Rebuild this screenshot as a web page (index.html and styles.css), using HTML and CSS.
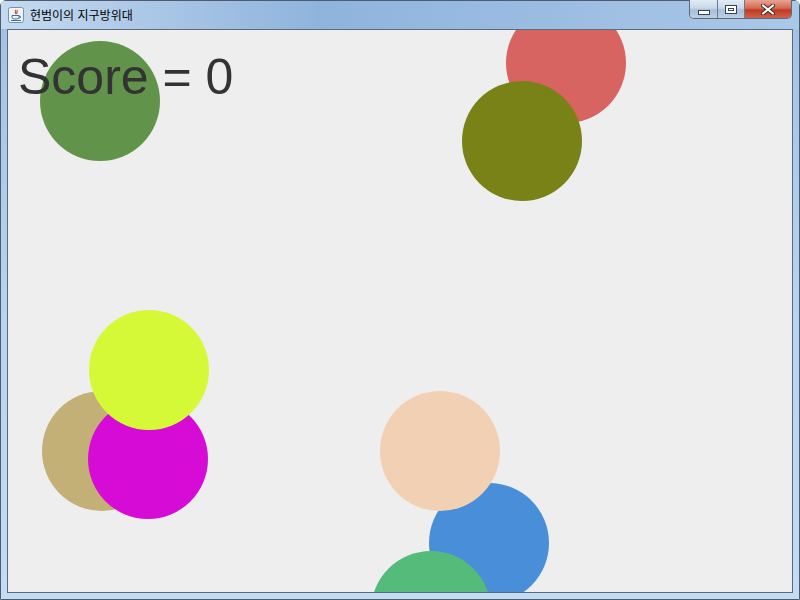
FILE: index.html
```html
<!DOCTYPE html>
<html lang="ko">
<head>
<meta charset="utf-8">
<title>현범이의 지구방위대</title>
<link rel="stylesheet" href="styles.css">
</head>
<body>
<div class="window">
  <div class="titlebar">
    <div class="app-icon">
      <svg width="16" height="16" viewBox="0 0 16 16">
        <rect x="0.5" y="0.5" width="15" height="15" rx="2" fill="#eef3f8" stroke="#7f8fa3"/>
        <path d="M7 3 C9 4 6 5 8 7 M9 3 C10 5 8 5 9 7" stroke="#e0501c" stroke-width="1.2" fill="none"/>
        <path d="M4 8.5 H11 V10 Q11 12 8.5 12 H6.5 Q4 12 4 10 Z" fill="none" stroke="#3a6fb0" stroke-width="1"/>
        <path d="M11 9 Q13 9 12.5 10.5 Q12 11 11 11" fill="none" stroke="#3a6fb0" stroke-width="1"/>
        <path d="M3 13.5 H13" stroke="#3a6fb0" stroke-width="1"/>
      </svg>
    </div>
    <div class="title">현범이의 지구방위대</div>
    <div class="controls">
      <div class="ctl ctl-min"><span class="min-bar"></span></div>
      <div class="ctl ctl-max"><span class="max-box"></span></div>
      <div class="ctl ctl-close">
        <svg width="14" height="11" viewBox="0 0 14 11">
          <path d="M2 1.5 L12 9.5 M12 1.5 L2 9.5" stroke="#3a2a2a" stroke-width="4" stroke-linecap="round"/>
          <path d="M2 1.5 L12 9.5 M12 1.5 L2 9.5" stroke="#ffffff" stroke-width="2.2" stroke-linecap="round"/>
        </svg>
      </div>
    </div>
  </div>
  <div class="client">
    <div class="canvas">
      <div class="ball" style="left:498px;top:-27px;background:#d76461"></div>
      <div class="ball" style="left:454px;top:51px;background:#788216"></div>
      <div class="ball" style="left:32px;top:11px;background:#61944a"></div>
      <div class="ball" style="left:34px;top:361px;background:#c2b077"></div>
      <div class="ball" style="left:80px;top:369px;background:#d60cd6"></div>
      <div class="ball" style="left:81px;top:280px;background:#d5f937"></div>
      <div class="ball" style="left:421px;top:453px;background:#498ed8"></div>
      <div class="ball" style="left:372px;top:361px;background:#f2d0b3"></div>
      <div class="ball" style="left:363px;top:521px;background:#54bb7b"></div>
      <div class="score">Score = 0</div>
    </div>
  </div>
</div>
</body>
</html>
```

FILE: styles.css
```css
* { box-sizing: border-box; }
html, body {
  margin: 0;
  padding: 0;
  width: 800px;
  height: 600px;
  overflow: hidden;
  background: #ffffff;
}
.window {
  width: 800px;
  height: 600px;
  display: flex;
  flex-direction: column;
  background: linear-gradient(180deg, #b9d1ea 0px, #a4c2e5 29px, #b6d3f0 300px, #c4dcf4 600px);
  border: 1px solid #4f5c6d;
  border-radius: 6px 6px 0 0;
}
.titlebar {
  height: 28px;
  display: flex;
  align-items: flex-start;
  padding: 0 7px 0 7px;
  background: linear-gradient(90deg, #c5daf0 0%, #a9c6e6 20%, #8fb4dc 40%, #9cbde2 70%, #aac8e8 100%);
}
.app-icon {
  width: 16px;
  height: 16px;
  margin-top: 6px;
  flex: none;
}
.app-icon svg { display: block; }
.title {
  margin-left: 6px;
  margin-top: 6px;
  font-family: "Noto Sans CJK KR", "Noto Sans", sans-serif;
  font-size: 12px;
  line-height: 16px;
  color: #000000;
}
.controls {
  margin-left: auto;
  display: flex;
  height: 19px;
  margin-top: -1px;
  border: 1px solid #5d6a7c;
  border-top: none;
  border-radius: 0 0 5px 5px;
  overflow: hidden;
}
.ctl {
  height: 18px;
  display: flex;
  align-items: center;
  justify-content: center;
}
.ctl-min, .ctl-max {
  width: 28px;
  background: linear-gradient(180deg, #e2ebf5 0%, #c9d8ea 45%, #a9bfd8 55%, #bccfe5 100%);
  border-right: 1px solid #6b7a8d;
}
.ctl-max { width: 27px; }
.ctl-close {
  width: 46px;
  background: linear-gradient(180deg, #e8a493 0%, #d46a54 45%, #c23a1f 55%, #d2604a 100%);
}
.min-bar {
  display: block;
  width: 12px;
  height: 5px;
  margin-top: 6px;
  background: #ffffff;
  border: 1px solid #354259;
}
.max-box {
  display: block;
  width: 12px;
  height: 9px;
  border: 1px solid #354259;
  background: #ffffff;
  box-shadow: inset 0 0 0 2px #ffffff, inset 0 0 0 3px #354259;
}
.ctl-close svg { display: block; }
.client {
  margin: 0 6px 6px 6px;
  border: 1px solid #5b6a7d;
  flex: 1;
  display: flex;
}
.canvas {
  position: relative;
  width: 784px;
  height: 562px;
  background: #eeeeee;
  overflow: hidden;
}
.ball {
  position: absolute;
  width: 120px;
  height: 120px;
  border-radius: 50%;
}
.score {
  position: absolute;
  left: 10px;
  top: 17px;
  font-family: "Liberation Sans", Arial, sans-serif;
  font-size: 50px;
  line-height: 60px;
  color: #333333;
}
```
